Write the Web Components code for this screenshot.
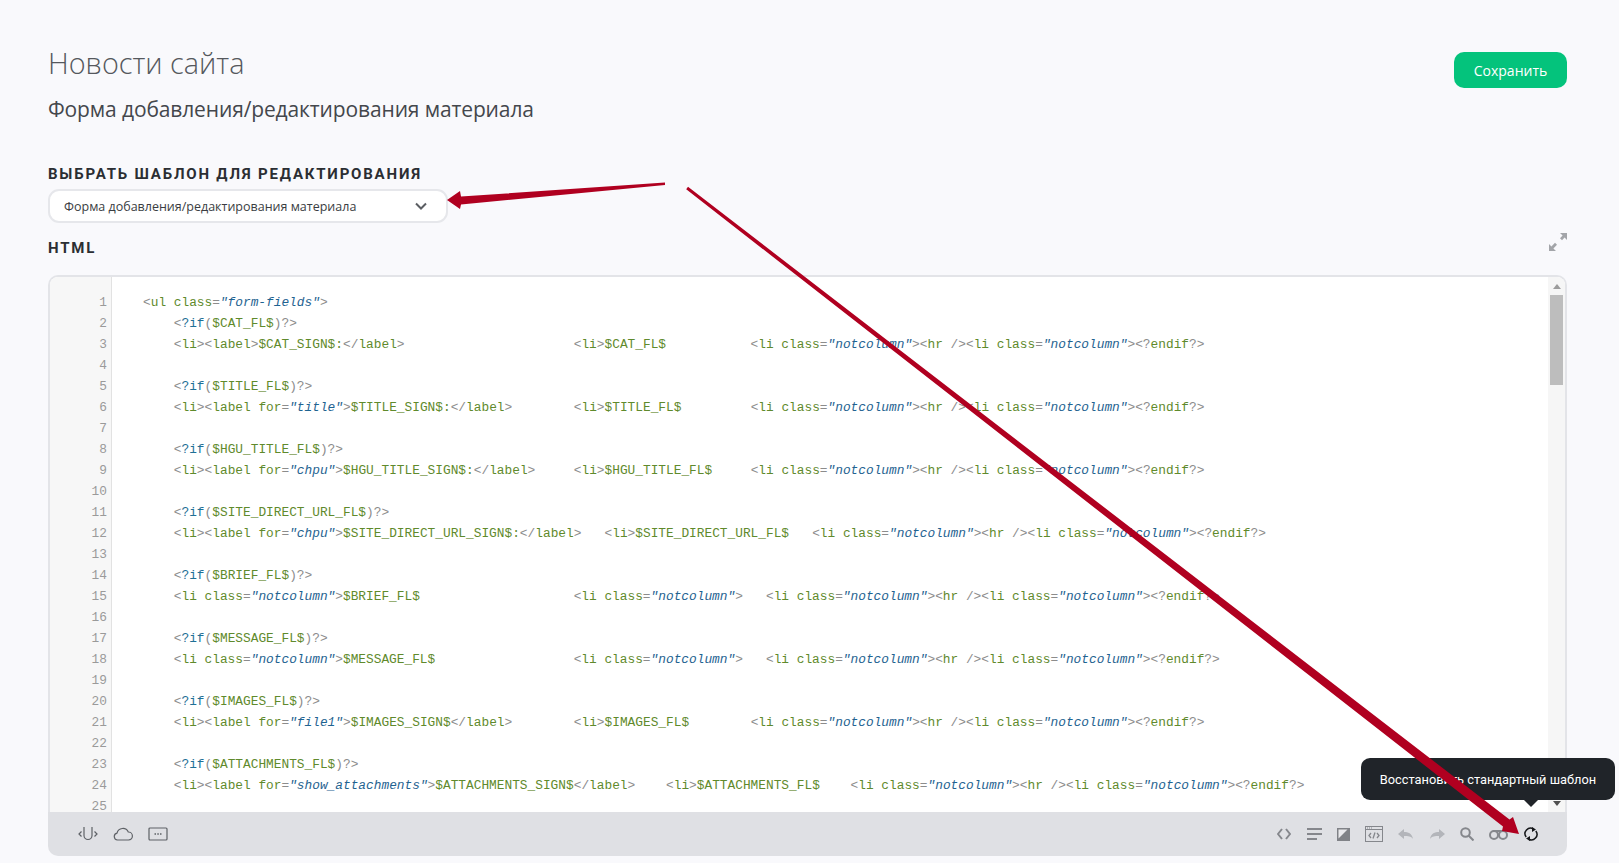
<!DOCTYPE html>
<html lang="ru">
<head>
<meta charset="utf-8">
<title>Новости сайта</title>
<style>
  html, body { margin: 0; height: 100%; }
  body { background: #f9f9fc; overflow: hidden; font-family: "Open Sans", "Noto Sans", sans-serif; }
</style>
</head>
<body>
<template-page>
  <page-header slot="header" title="Новости сайта" subtitle="Форма добавления/редактирования материала"></page-header>
  <template-select slot="select" label="ВЫБРАТЬ ШАБЛОН ДЛЯ РЕДАКТИРОВАНИЯ" value="Форма добавления/редактирования материала"></template-select>
  <code-editor slot="editor"></code-editor>
</template-page>
<red-arrows></red-arrows>

<script>
class TemplatePage extends HTMLElement {
  constructor () {
    super()
    this.attachShadow({ mode: 'open' }).innerHTML = /* html */`
      <style>
        :host{ display: block; padding: 42px 52px 0 48px; }
      </style>
      <slot name="header"></slot>
      <slot name="select"></slot>
      <slot name="editor"></slot>
    `
  }
}

class PageHeader extends HTMLElement {
  connectedCallback () {
    this.attachShadow({ mode: 'open' }).innerHTML = /* html */`
      <style>
        :host{ display: flex; justify-content: space-between; align-items: flex-start; }
        h1{ color: #55585d; font-size: 28.8px; font-weight: 300; line-height: 42px; margin: 0; }
        h2{ color: #44474c; font-size: 21px; font-weight: 400; line-height: 30px; margin: 10px 0 0; letter-spacing: -0.13px; }
        button{
          background: #04c37c; border: none; border-radius: 10px; color: #fff;
          font: 400 14px "Open Sans", sans-serif; height: 36px; margin-top: 10px; padding: 0; width: 113px;
        }
      </style>
      <div>
        <h1>${this.getAttribute('title')}</h1>
        <h2>${this.getAttribute('subtitle')}</h2>
      </div>
      <button>Сохранить</button>
    `
  }
}

class TemplateSelect extends HTMLElement {
  connectedCallback () {
    this.attachShadow({ mode: 'open' }).innerHTML = /* html */`
      <style>
        :host{ display: block; margin-top: 40px; }
        label{ color: #2b2e33; display: block; font: 700 15px/20px Roboto, sans-serif; letter-spacing: 1.8px; }
        .box{
          align-items: center; background: #fff; border: 2px solid #e6e7eb; border-radius: 11px; box-sizing: border-box;
          color: #3a3d42; display: flex; font-size: 12.5px; height: 34px; justify-content: space-between;
          margin-top: 5px; padding: 0 19px 0 14px; width: 400px;
        }
        svg{ display: block; }
      </style>
      <label>${this.getAttribute('label')}</label>
      <div class="box">
        <span>${this.getAttribute('value')}</span>
        <svg width="12" height="8" viewBox="0 0 12 8"><path d="M1 1.500l5 5 5-5" fill="none" stroke="#5b5e63" stroke-width="2"/></svg>
      </div>
    `
  }
}

const TAIL = '<li class="notcolumn"><hr /><li class="notcolumn"><?endif?>'
const CODE = [
  '<ul class="form-fields">',
  '    <?if($CAT_FL$)?>',
  '    <li><label>$CAT_SIGN$:</label>                      <li>$CAT_FL$           ' + TAIL,
  '',
  '    <?if($TITLE_FL$)?>',
  '    <li><label for="title">$TITLE_SIGN$:</label>        <li>$TITLE_FL$         ' + TAIL,
  '',
  '    <?if($HGU_TITLE_FL$)?>',
  '    <li><label for="chpu">$HGU_TITLE_SIGN$:</label>     <li>$HGU_TITLE_FL$     ' + TAIL,
  '',
  '    <?if($SITE_DIRECT_URL_FL$)?>',
  '    <li><label for="chpu">$SITE_DIRECT_URL_SIGN$:</label>   <li>$SITE_DIRECT_URL_FL$   ' + TAIL,
  '',
  '    <?if($BRIEF_FL$)?>',
  '    <li class="notcolumn">$BRIEF_FL$                    <li class="notcolumn">   ' + TAIL,
  '',
  '    <?if($MESSAGE_FL$)?>',
  '    <li class="notcolumn">$MESSAGE_FL$                  <li class="notcolumn">   ' + TAIL,
  '',
  '    <?if($IMAGES_FL$)?>',
  '    <li><label for="file1">$IMAGES_SIGN$</label>        <li>$IMAGES_FL$        ' + TAIL,
  '',
  '    <?if($ATTACHMENTS_FL$)?>',
  '    <li><label for="show_attachments">$ATTACHMENTS_SIGN$</label>    <li>$ATTACHMENTS_FL$    ' + TAIL,
  ''
]

const escapeHtml = text => text.replace(/&/g, '&amp;').replace(/</g, '&lt;').replace(/>/g, '&gt;')

// very small highlighter, just enough for these lines
const highlight = line => line
  .split(/("[^"]*"|<\?if|\?>|<\?|<\/|\/>|[<>=()])/)
  .map(part => {
    if (part === '') return ''
    if (part[0] === '"') return `<i>${escapeHtml(part)}</i>`
    if (part === '<?if') return `<s>&lt;</s><b>?if</b>`
    if (/^(<\?|\?>|<\/|\/>|[<>=()])$/.test(part)) return `<s>${escapeHtml(part)}</s>`
    return escapeHtml(part)
  })
  .join('')

class CodeEditor extends HTMLElement {
  connectedCallback () {
    this.attachShadow({ mode: 'open' }).innerHTML = /* html */`
      <style>
        :host{ display: block; margin-top: 15px; }
        .title{ align-items: flex-start; display: flex; justify-content: space-between; height: 37px; }
        .title span{ color: #2b2e33; font: 700 15px/20px Roboto, sans-serif; letter-spacing: 1.8px; }
        .title svg{ margin: -6px -1px 0 0; }
        .frame{
          background: #fff; border: 2px solid #e3e4e8; border-bottom: none; border-radius: 10px 10px 0 0;
          box-sizing: border-box; display: flex; height: 537px; overflow: hidden;
        }
        .gutter{
          background: #f7f7f7; border-right: 1px solid #e2e2e2; box-sizing: border-box; color: #9a9a9a; flex: none;
          padding: 15px 4px 0 0; text-align: right; width: 62px;
        }
        .code{ color: #5f8a2c; flex: 1; min-width: 0; padding: 15px 0 0 31px; white-space: pre; }
        .gutter, .code{ font: 12.82px/21px "Liberation Mono", monospace; }
        .gutter div, .code div{ height: 21px; }
        i{ color: #1f6391; font-style: italic; }
        s{ color: #8c8c8c; text-decoration: none; }
        b{ color: #1f7096; font-weight: 400; }
        .scroll{ background: #f6f6f6; flex: none; position: relative; width: 17px; }
        .scroll .up, .scroll .down{ border: 4px solid transparent; height: 0; left: 5px; position: absolute; width: 0; }
        .scroll .up{ border-bottom: 5px solid #9c9c9c; border-top: none; top: 7px; }
        .scroll .down{ border-top: 5px solid #505050; border-bottom: none; bottom: 6px; }
        .scroll .thumb{ background: #bdbdbd; height: 90px; left: 2px; position: absolute; top: 18px; width: 13px; }
      </style>
      <div class="title">
        <span>HTML</span>
        <svg width="20" height="20" viewBox="0 0 20 20" fill="#a3a5a9">
          <path d="M19 1v7l-2.400-2.400-2.600 2.600-2-2 2.600-2.600L12 1z"/>
          <path d="M1 19v-7l2.400 2.400 3.600-3.600 2 2-3.600 3.600L8 19z"/>
        </svg>
      </div>
      <div class="frame">
        <div class="gutter">${CODE.map((_, i) => `<div>${i + 1}</div>`).join('')}</div>
        <div class="code">${CODE.map(line => `<div>${highlight(line)}</div>`).join('')}</div>
        <div class="scroll"><div class="up"></div><div class="thumb"></div><div class="down"></div></div>
      </div>
      <editor-toolbar></editor-toolbar>
    `
  }
}

class EditorToolbar extends HTMLElement {
  constructor () {
    super()
    this.attachShadow({ mode: 'open' }).innerHTML = /* html */`
      <style>
        :host{
          align-items: center; background: #dfe0e4; border-radius: 0 0 10px 10px; display: flex;
          height: 44px; justify-content: space-between; padding: 0 29px 0 30px;
        }
        .group{ align-items: center; display: flex; }
        .left{ gap: 15px; }
        .right{ gap: 15px; }
        .right .more{ margin-left: 1px; }
        svg{ display: block; fill: none; }
        .wrap{ position: relative; }
        .tip{
          background: #202429; border-radius: 9px; bottom: 41px; box-sizing: border-box; color: #fff;
          font: 400 12.8px/43px Roboto, sans-serif; height: 42px; position: absolute; right: -77px; text-align: center;
          white-space: nowrap; width: 254px;
        }
        .tip::after{
          border: 7px solid transparent; border-bottom: none; border-top: 7px solid #202429; bottom: -7px; content: "";
          left: 163px; position: absolute;
        }
      </style>
      <div class="group left">
        <svg width="20" height="18" viewBox="0 0 20 18" stroke="#5e6166" stroke-width="1.200">
          <path d="M3.500 6.500L1 9l2.500 2.500M16.500 6.500L19 9l-2.500 2.500M6 2v8.500a4 4 0 0 0 8 0V2"/>
        </svg>
        <svg width="20" height="14" viewBox="0 0 20 14" stroke="#5e6166" stroke-width="1.200">
          <path d="M4.500 13a3.500 3.500 0 0 1-.5-6.900A6 6 0 0 1 15.300 5 4 4 0 0 1 15.500 13z"/>
        </svg>
        <svg width="20" height="14" viewBox="0 0 20 14" stroke="#5e6166" stroke-width="1.200">
          <rect x="1" y="1" width="18" height="12" rx="1"/>
          <path d="M6.500 7h1.500M9.300 7h1.500M12 7h1.500" stroke-width="1.500"/>
        </svg>
      </div>
      <div class="group right">
        <svg width="14" height="12" viewBox="0 0 14 12" stroke="#85878c" stroke-width="2"><path d="M5 1L1 6l4 5M9 1l4 5-4 5"/></svg>
        <svg class="more" width="15" height="12" viewBox="0 0 15 12" stroke="#85878c" stroke-width="2"><path d="M0 1h15M0 6h15M0 11h10"/></svg>
        <svg width="13" height="13" viewBox="0 0 13 13"><rect width="13" height="13" fill="#808287"/><path d="M1.500 1.500h9l-9 9z" fill="#e9e9ec"/></svg>
        <svg width="18" height="16" viewBox="0 0 18 16" stroke="#85878c">
          <rect x=".5" y=".5" width="17" height="15"/>
          <path d="M1 3.500h16"/>
          <path d="M2 2h1M4 2h1M6 2h1" stroke-width="1"/>
          <path d="M6 7L4 9.500 6 12M12 7l2 2.500-2 2.500M10 6.500l-2 6" stroke-width="1.300"/>
        </svg>
        <svg width="16" height="12" viewBox="0 0 16 12"><path d="M0 6l6-5v3c4 0 8 1 9 7-2-3-5-3-9-3v3z" fill="#b3b5ba"/></svg>
        <svg width="16" height="12" viewBox="0 0 16 12"><path d="M16 6l-6-5v3c-4 0-8 1-9 7 2-3 5-3 9-3v3z" fill="#b3b5ba"/></svg>
        <svg width="14" height="14" viewBox="0 0 14 14" stroke="#85878c" stroke-width="2"><circle cx="5.500" cy="5.500" r="4.300"/><path d="M8.500 8.500L13.500 13.500"/></svg>
        <svg width="19" height="12" viewBox="0 0 19 12" stroke="#85878c" stroke-width="2"><circle cx="5" cy="7" r="4"/><circle cx="14" cy="7" r="4"/><path d="M4 3h11"/></svg>
        <div class="wrap more">
          <svg width="14" height="14" viewBox="0 0 14 14" stroke="#15171a" stroke-width="1.500">
            <path d="M2.200 10A5.500 5.500 0 0 1 9.500 2M11.800 4A5.500 5.500 0 0 1 4.500 12"/>
            <path d="M8 0l4 2.500-4 2.500zM6 14l-4-2.500 4-2.500z" fill="#15171a" stroke="none"/>
          </svg>
          <div class="tip">Восстановить стандартный шаблон</div>
        </div>
      </div>
    `
  }
}

class RedArrows extends HTMLElement {
  constructor () {
    super()
    this.attachShadow({ mode: 'open' }).innerHTML = /* html */`
      <style>
        :host{ display: block; height: 863px; left: 0; pointer-events: none; position: absolute; top: 0; width: 1619px; }
        svg{ display: block; }
      </style>
      <svg width="1619" height="863" viewBox="0 0 1619 863" fill="#b00020">
        <path d="M665 182.500L665 185 461 204.500 460 209 447 200 460 191 461 196.500z"/>
        <path d="M688 186.800L1509.500 819.500 1513 817 1519 834 1502 831 1503 826.500 686.200 189.200z"/>
      </svg>
    `
  }
}

customElements.define('template-page', TemplatePage)
customElements.define('page-header', PageHeader)
customElements.define('template-select', TemplateSelect)
customElements.define('code-editor', CodeEditor)
customElements.define('editor-toolbar', EditorToolbar)
customElements.define('red-arrows', RedArrows)
</script>
</body>
</html>
